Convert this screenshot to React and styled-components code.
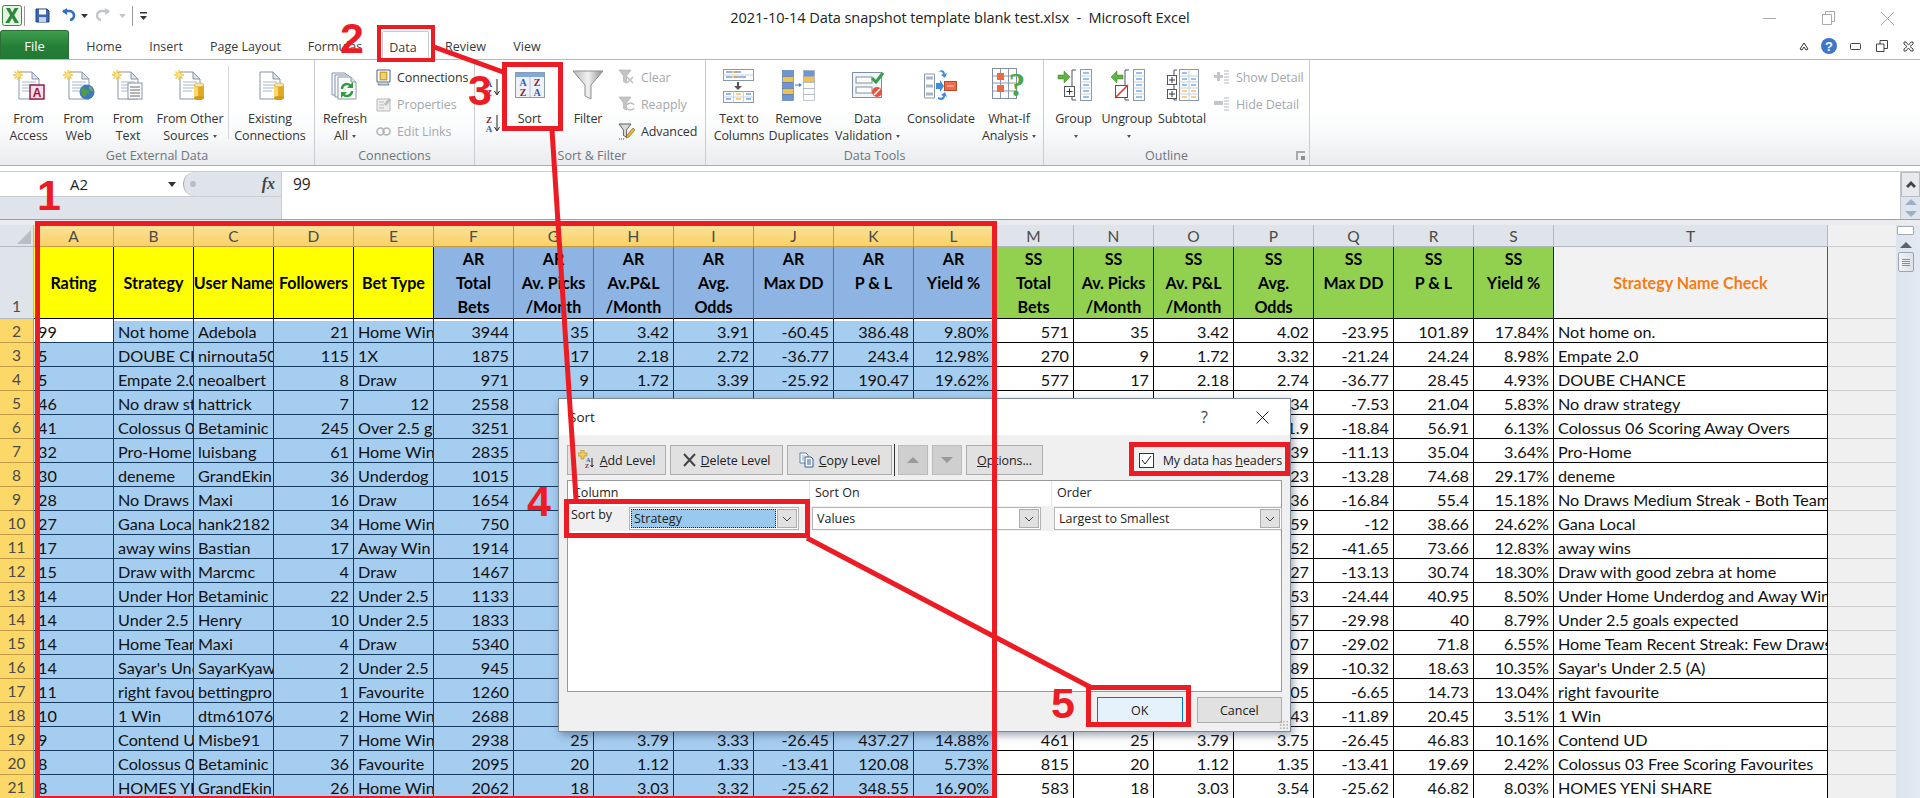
import React from 'react';
import styled, { createGlobalStyle, css } from 'styled-components';

const Global = createGlobalStyle`
  html, body { margin: 0; padding: 0; background: #fff; }
  body { font-family: "Open Sans", "Liberation Sans", sans-serif; overflow: hidden; }
  * { box-sizing: border-box; }
`;

const RED = '#ed1c24';
const UI = `"Open Sans", "Liberation Sans", sans-serif`;
const CELL = `Lato, "Liberation Sans", sans-serif`;

const Page = styled.div`position: relative; width: 1920px; height: 798px; overflow: hidden; background: #fff;`;

/* ---------- title bar ---------- */
const TitleBar = styled.header`position: relative; height: 31px; display: flex; align-items: center; background: #fff;`;
const Qat = styled.div`display: flex; align-items: center; height: 100%;`;
const QatSlot = styled.div`width: ${p => p.$w}px; display: flex; justify-content: center; align-items: center;`;
const QatSep = styled.div`width: 1px; height: 20px; background: #9a9a9a; margin: 0 ${p => p.$m || 0}px;`;
const TitleText = styled.div`
  position: absolute; left: 0; right: 0; top: 7px; text-align: center; white-space: pre;
  font: 14.6px/20px ${UI}; color: #222; letter-spacing: -0.1px;
`;
const WinControls = styled.div`position: absolute; right: 26px; top: 11px; display: flex; gap: 46px; align-items: center;`;

/* ---------- tabs ---------- */
const TabRow = styled.nav`position: relative; height: 29px; display: flex; align-items: flex-end; border-bottom: 1px solid #b6babf; background: #fff;`;
const FileTab = styled.div`
  width: 69px; height: 29px; margin-right: 3px; padding-top: 1px; display: flex; align-items: center; justify-content: center;
  background: linear-gradient(#3f9f4d, #237f37 55%, #217a33); border: 1px solid #2b6e36; border-bottom: 0;
  border-radius: 3px 3px 0 0; color: #fff; font: 13px ${UI};
`;
const Tab = styled.div`
  width: ${p => p.$w}px; height: 28px; padding-top: 2px; display: flex; align-items: center; justify-content: center;
  font: 12.5px ${UI}; color: #3a3a3a;
  ${p => p.$active && css`
    margin: 0 2px -1px 7px; padding-right: 5px; height: 29px; background: #fff;
    border: 1px solid #c6cacf; border-bottom: 0; border-radius: 2px 2px 0 0;
  `}
`;
const RibbonControls = styled.div`position: absolute; left: 1799px; top: 7px; display: flex; align-items: center; height: 16px;`;

/* ---------- ribbon ---------- */
const Ribbon = styled.section`
  height: 106px; display: flex; border-bottom: 1px solid #a9adb3;
  background: linear-gradient(#fff 45%, #f9fafb 70%, #e9ebee);
`;
const Group = styled.div`
  width: ${p => p.$w}px; display: flex; flex-direction: column; border-right: 1px solid #c9ccd1; position: relative;
`;
const GroupBody = styled.div`flex: 1; display: flex; padding-left: ${p => p.$pad || 0}px;`;
const GroupLabel = styled.div`height: 21px; padding-top: 2px; text-align: center; font: 12.5px/19px ${UI}; color: #6d7580; padding-left: ${p => p.$shift || 0}px; padding-right: ${p => p.$rshift || 0}px;`;
const BigBtn = styled.div`width: ${p => p.$w}px; display: flex; flex-direction: column; align-items: center; padding-top: 9px; position: relative;`;
const BigIcon = styled.div`height: 32px; margin-bottom: 9px; display: flex; align-items: center; justify-content: center;`;
const BigLabel = styled.div`font: 12.5px/17px ${UI}; color: #333; text-align: center; white-space: pre-line; letter-spacing: -0.1px;`;
const Caret = styled.span`display: inline-block; width: 0; height: 0; margin-left: 4px; vertical-align: 2px; border: 2.5px solid transparent; border-top: 3px solid #555; border-bottom: 0;`;
const VDivider = styled.div`width: 1px; margin: 6px 1px 5px; background: #d5d8dc;`;
const SmallCol = styled.div`display: flex; flex-direction: column; padding-top: ${p => p.$top || 4}px; gap: ${p => p.$gap || 1}px; margin-left: ${p => p.$ml || 0}px;`;
const SmallItem = styled.div`height: 26px; display: flex; align-items: center; gap: 6px; font: 12.5px ${UI}; letter-spacing: -0.1px; color: ${p => p.$off ? '#a4a8ad' : '#333'}; white-space: nowrap;`;
const SortArrows = styled.div`width: 18px; margin: 0 0 0 9px; display: flex; flex-direction: column; padding-top: 18px; gap: 16px;`;
const Launcher = styled.div`position: absolute; right: 4px; bottom: 5px; width: 9px; height: 9px; border-left: 2px solid #aaa; border-top: 2px solid #aaa; &::after { content: ''; position: absolute; right: 0; bottom: 0; width: 4px; height: 4px; background: #8a8f96; }`;

/* ---------- formula bar ---------- */
const FormulaBar = styled.div`margin-top: 5px; height: 48px; display: flex; border-top: 1px solid #c9ccd1; background: #fff; position: relative;`;
const NameArea = styled.div`width: 282px; display: flex; flex-direction: column; border-right: 1px solid #c9ccd1;`;
const NameTop = styled.div`height: 24px; display: flex; align-items: center;`;
const NameBox = styled.div`width: 183px; padding-left: 70px; display: flex; align-items: center; justify-content: space-between; padding-right: 7px; font: 15px ${UI}; color: #222;`;
const DownTri = styled.span`width: 0; height: 0; border: 4.5px solid transparent; border-top: 5px solid #333; border-bottom: 0;`;
const FxBox = styled.div`flex: 1; height: 100%; background: #dfe3ea; border-radius: 12px 0 0 12px; border-left: 1px solid #a9adb3; display: flex; align-items: center; padding-left: 6px; justify-content: space-between; padding-right: 6px;`;
const Knob = styled.span`width: 6px; height: 6px; border-radius: 50%; background: #b9bec5;`;
const Fx = styled.span`font: italic bold 16px "Liberation Serif", serif; color: #444;`;
const NameBottom = styled.div`flex: 1; background: #dfe3ea; border-top: 1px solid #c9ccd1;`;
const FormulaValue = styled.div`flex: 1; padding: 2px 0 0 11px; font: 15.5px/20px ${UI}; color: #222;`;
const MiniScroll = styled.div`width: 20px; display: flex; flex-direction: column; background: #dfe5ee; border-left: 1px solid #c3c7cd;`;
const MiniUp = styled.div`height: 25px; background: #e7e9ec; border: 1px solid #b9bdc3; display: flex; align-items: center; justify-content: center;`;
const MiniArrows = styled.div`flex: 1; display: flex; flex-direction: column; align-items: center; justify-content: center; gap: 6px;`;
const Tri = styled.span`width: 0; height: 0; border-left: 6px solid transparent; border-right: 6px solid transparent; ${p => p.$down ? `border-top: 6px solid ${p.$c || '#9fb0c4'};` : `border-bottom: 6px solid ${p.$c || '#9fb0c4'};`}`;

/* ---------- sheet ---------- */
const SheetArea = styled.div`height: 579px; display: flex; border-top: 1px solid #9ca1a7; padding-top: 5px; background: #e9ebef;`;
const Sheet = styled.div`width: 1896px; display: grid; grid-template-columns: 34px repeat(19, 80px) 274px 68px; grid-auto-rows: 24px; grid-template-rows: 22px 72px; background: #f0f0f0; align-content: start;`;
const Corner = styled.div`background: #dfe3ea; border-right: 1px solid #b3b8bf; border-bottom: 1px solid #b3b8bf; position: relative; &::after { content: ''; position: absolute; right: 2px; bottom: 2px; border-left: 14px solid transparent; border-bottom: 14px solid #b9bec5; }`;
const ColHead = styled.div`
  display: flex; align-items: center; justify-content: center; font: 15.5px ${CELL}; color: #4b4b4b;
  border-bottom: 1px solid ${p => p.$sel ? '#c49a45' : '#b3b8bf'}; border-right: 1px solid ${p => p.$sel ? '#c49a45' : '#b3b8bf'};
  background: ${p => p.$sel ? 'linear-gradient(#fbe39b,#f9d166)' : '#dfe3ea'};
`;
const RowHead = styled.div`
  display: flex; align-items: center; justify-content: center; font: 15.5px ${CELL}; color: #4b4b4b;
  border-bottom: 1px solid ${p => p.$sel ? '#c49a45' : '#b3b8bf'}; border-right: 1px solid ${p => p.$sel ? '#c49a45' : '#b3b8bf'};
  background: ${p => p.$sel ? '#fcd869' : '#dfe3ea'};
  ${p => p.$tall && 'align-items: flex-end; padding-bottom: 3px;'}
`;
const HEADBG = { y: '#ffff00', b: '#8db4e2', g: '#92d050', t: '#f2f2f2' };
const HEADLINE = { y: '#000', b: '#4f74a3', g: '#1b2a12', t: '#555' };
const HeadCell = styled.div`
  background: ${p => HEADBG[p.$k]}; color: ${p => p.$k === 't' ? '#f57c14' : '#000'};
  border-right: 1px solid ${p => HEADLINE[p.$k]}; border-bottom: 1px solid #000;
  font: bold 16.1px/24px ${CELL}; text-align: center; white-space: pre-line; overflow: hidden;
  ${p => p.$single && 'display: flex; align-items: center; justify-content: center; white-space: nowrap;'}
`;
const Cell = styled.div`
  background: ${p => p.$active ? '#fff' : p.$blue ? '#a5cdf0' : '#fff'};
  border-right: 1px solid ${p => p.$blue ? '#153a5e' : '#000'};
  border-bottom: 1px solid ${p => p.$blue ? '#153a5e' : '#000'};
  ${p => p.$first && 'box-shadow: inset 0 2px 0 #fff;'}
  font: 16.2px/25px ${CELL}; color: #111; padding: 0 4px; white-space: nowrap; overflow: hidden;
  text-align: ${p => p.$right ? 'right' : 'left'};
`;
const BlankCell = styled.div`border-bottom: 1px solid #cfcfcf; background: #f0f0f0;`;
const VScroll = styled.div`flex: 1; background: linear-gradient(90deg, #dde4ee, #e3e9f2); display: flex; flex-direction: column; align-items: center; padding-right: 5px;`;
const SplitBox = styled.div`width: 17px; height: 9px; margin: 1px 0 7px; background: #fff; border: 1px solid #a5aab1; border-radius: 1px;`;
const Thumb = styled.div`width: 16px; height: 20px; margin-top: 4px; background: linear-gradient(90deg,#f0f2f5,#dde1e7); border: 1px solid #9ea5ae; border-radius: 2px; display: flex; flex-direction: column; justify-content: center; align-items: center; gap: 1px; & > i { width: 8px; height: 1px; background: #8a9099; }`;

/* ---------- dialog ---------- */
const Dialog = styled.div`
  position: absolute; left: 558px; top: 398px; width: 733px; height: 334px; background: #f0f0f0;
  border: 1px solid #7d8994; box-shadow: 2px 3px 8px rgba(30,50,80,.45); display: flex; flex-direction: column;
  font: 12.5px ${UI}; color: #222;
`;
const DlgTitle = styled.div`height: 36px; flex: none; background: #fff; display: flex; align-items: center; padding: 0 21px 0 10px; font: 13.5px ${UI}; color: #222;`;
const DlgTitleText = styled.div`flex: 1;`;
const DlgHelp = styled.span`font: 16px ${UI}; color: #444; margin-right: 48px;`;
const DlgBar = styled.div`flex: none; margin-top: 10px; height: 30px; padding: 0 8px; display: flex; align-items: center;`;
const DlgBtn = styled.div`
  width: ${p => p.$w}px; height: 30px; margin-right: ${p => p.$mr ?? 4}px; flex: none; display: flex; align-items: center; justify-content: center; gap: 5px;
  background: ${p => p.$off ? '#cfcfcf' : '#e1e1e1'}; border: 1px solid ${p => p.$off ? '#bcbcbc' : '#adadad'}; white-space: nowrap; letter-spacing: -0.1px;
`;
const DlgSep = styled.div`width: 1px; height: 32px; background: #333; margin: 0 3px 0 -2px;`;
const CheckWrap = styled.div`margin-left: auto; display: flex; align-items: center; gap: 9px; white-space: nowrap; letter-spacing: -0.1px;`;
const CheckBox = styled.div`width: 15px; height: 15px; background: #fff; border: 1px solid #333; display: flex; align-items: center; justify-content: center;`;
const List = styled.div`flex: none; margin: 5px 0 0 8px; width: 715px; height: 212px; background: #fff; border: 1px solid #9a9a9a; display: flex; flex-direction: column;`;
const ListHead = styled.div`display: grid; grid-template-columns: 242px 242px 1fr; height: 25px; flex: none;`;
const ListHeadCell = styled.div`padding: 3px 0 0 5px; border-right: 1px solid #e6e6e6; &:last-child { border: 0; }`;
const ListRow = styled.div`display: grid; grid-template-columns: 242px 242px 1fr; height: 25px; flex: none; background: #f0f0f0; align-items: center;`;
const ListCell = styled.div`display: flex; align-items: center; padding-left: 2px; height: 100%;`;
const SortBy = styled.span`width: 59px; padding-left: 1px; margin-top: -9px;`;
const Combo = styled.div`width: ${p => p.$w}px; height: 23px; background: #fff; border: 1px solid #b4b4b4; display: flex; align-items: center; padding: 1px; gap: 1px;`;
const ComboText = styled.div`flex: 1; height: 100%; display: flex; align-items: center; padding-left: 3px; ${p => p.$sel && 'background: #99c9ef; outline: 1px dotted #223; outline-offset: -1px;'}`;
const ComboBtn = styled.div`width: 20px; height: 100%; background: #e1e1e1; border: 1px solid #adadad; display: flex; align-items: center; justify-content: center;`;
const DlgFooter = styled.div`flex: none; margin-top: 5px; padding-right: 8px; display: flex; justify-content: flex-end; gap: 14px;`;
const FootBtn = styled.div`width: 85.5px; height: 26px; display: flex; align-items: center; justify-content: center; background: ${p => p.$def ? '#e5f1fb' : '#e1e1e1'}; border: 1px solid ${p => p.$def ? '#0078d7' : '#adadad'};`;
const Grip = styled.div`position: absolute; right: 1px; bottom: 1px; width: 10px; height: 10px; background-image: radial-gradient(#b5b5b5 1px, transparent 1.2px); background-size: 3.3px 3.3px;`;

/* ---------- annotations ---------- */
const RedBox = styled.div`position: absolute; left: ${p => p.$x}px; top: ${p => p.$y}px; width: ${p => p.$w}px; height: ${p => p.$h}px; border: ${p => p.$b || 5}px solid ${RED}; pointer-events: none;`;
const Marker = styled.div`position: absolute; left: ${p => p.$x}px; top: ${p => p.$y}px; font: bold 43px/43px "Liberation Sans", sans-serif; color: ${RED};`;
const LineLayer = styled.svg`position: absolute; left: 0; top: 0; pointer-events: none;`;

/* ---------- icons ---------- */
const Sparkle = () => <g stroke="#f3c532" strokeWidth="1.3"><path d="M5 1v10M0 6h10M1.5 2.5l7 7M8.5 2.5l-7 7"/><circle cx="5" cy="6" r="2" fill="#fbe68a" stroke="none"/></g>;
const Doc = ({ children, lines = true, spark = true }) => (
  <svg width="32" height="32" viewBox="0 0 32 32">
    <path d="M6 3h13l7 7v20H6z" fill="#fff" stroke="#8795aa"/>
    <path d="M19 3v7h7z" fill="#dde3ec" stroke="#8795aa"/>
    {lines && <path d="M9 13h14M9 16h14M9 19h14M9 22h9" stroke="#a7b7cf"/>}
    {spark && <Sparkle />}
    {children}
  </svg>
);
const Cyl = ({ x = 20, y = 16 }) => (
  <g>
    <rect x={x} y={y} width="10" height="13" fill="#e4a81e"/>
    <rect x={x} y={y} width="4" height="13" fill="#f7d774"/>
    <ellipse cx={x + 5} cy={y} rx="5" ry="2" fill="#fbe6a0" stroke="#c48c14" strokeWidth=".5"/>
    <ellipse cx={x + 5} cy={y + 13} rx="5" ry="2" fill="#d49a18"/>
  </g>
);
const IconAccess = () => <Doc><rect x="17" y="16" width="14" height="14" fill="#f8dfe8" stroke="#8c1238" strokeWidth="1.4"/><text x="24" y="27.5" fontSize="12" fontWeight="bold" textAnchor="middle" fill="#a3123f" fontFamily="Liberation Sans">A</text></Doc>;
const IconWeb = () => <Doc><circle cx="24" cy="23" r="7.5" fill="#3f78c4"/><path d="M19 19c3 0 4 2 6 2s1 3-1 4-2 4-4 2-3-6-1-8z" fill="#4e9e3c"/><path d="M26 17c2 0 4 3 4 5-2 1-3-1-4-2z" fill="#6ab04c"/></Doc>;
const IconText = () => <Doc><rect x="16" y="14" width="14" height="16" fill="#fff" stroke="#8795aa"/><path d="M18 18h10M18 21h10M18 24h10M18 27h10" stroke="#555" strokeWidth=".9"/></Doc>;
const IconOther = () => <Doc><Cyl /></Doc>;
const IconExisting = () => <Doc spark={false}><Cyl /></Doc>;
const IconRefresh = () => (
  <svg width="32" height="32" viewBox="0 0 32 32">
    <path d="M3 4h13l5 5v17H3z" fill="#f4f6f9" stroke="#8795aa"/>
    <path d="M6 6h13l5 5v17H6z" fill="#f8f9fb" stroke="#8795aa"/>
    <path d="M9 8h13l5 5v17H9z" fill="#fff" stroke="#8795aa"/>
    <path d="M22 8v5h5" fill="#dde3ec" stroke="#8795aa"/>
    <path d="M13 20a5 5 0 0 1 9-3" fill="none" stroke="#2f9e3c" strokeWidth="2.4"/><path d="M24 13v6h-6z" fill="#2f9e3c"/>
    <path d="M23 22a5 5 0 0 1-9 3" fill="none" stroke="#2f9e3c" strokeWidth="2.4"/><path d="M12 29v-6h6z" fill="#2f9e3c"/>
  </svg>
);
const IconConn = () => <svg width="15" height="17" viewBox="0 0 15 17"><path d="M1 1h13v12H1z" fill="#fff" stroke="#47608a"/><path d="M3 14l-1 2h11l-1-2" fill="#c8d3e3" stroke="#47608a" strokeWidth=".7"/><rect x="4" y="3" width="7" height="8" fill="#e9b632" stroke="#a77f1d" strokeWidth=".6"/><path d="M5 5h5M5 7h5M5 9h5" stroke="#fff" strokeWidth=".7"/></svg>;
const IconProps = () => <svg width="15" height="16" viewBox="0 0 15 16"><path d="M1 3h13v12H1z" fill="#eee" stroke="#b7b7b7"/><path d="M3 6h5M3 9h5M3 12h5" stroke="#bbb"/><path d="M8 8l5-6 2 2-5 6z" fill="#bdbdbd"/></svg>;
const IconLinks = () => <svg width="15" height="9" viewBox="0 0 15 9" fill="none" stroke="#b3b3b3" strokeWidth="1.6"><rect x="1" y="1" width="7" height="7" rx="3.5"/><rect x="7" y="1" width="7" height="7" rx="3.5"/></svg>;
const Letters = ({ a, b, x, c1, c2, size = 9 }) => <g fontFamily="Liberation Serif" fontWeight="bold" fontSize={size} textAnchor="middle"><text x={x} y={size} fill={c1}>{a}</text><text x={x} y={size * 2} fill={c2}>{b}</text></g>;
const IconAZ = () => <svg width="18" height="20" viewBox="0 0 18 20"><Letters a="A" b="Z" x="5" c1="#2a5fb0" c2="#8a2030"/><path d="M13 1v15M10.5 13l2.5 4 2.5-4" stroke="#222" fill="none"/></svg>;
const IconZA = () => <svg width="18" height="20" viewBox="0 0 18 20"><Letters a="Z" b="A" x="5" c1="#8a2030" c2="#2a5fb0"/><path d="M13 1v15M10.5 13l2.5 4 2.5-4" stroke="#222" fill="none"/></svg>;
const IconSort = () => (
  <svg width="30" height="26" viewBox="0 0 30 26">
    <rect x=".5" y=".5" width="29" height="25" fill="#eef2f8" stroke="#8a9bb5"/>
    <rect x="1" y="1" width="28" height="4" fill="#7fa8dd"/>
    <path d="M15 5v20" stroke="#b9c4d6"/>
    <g fontFamily="Liberation Serif" fontWeight="bold" fontSize="10" textAnchor="middle">
      <text x="8" y="14" fill="#2a5fb0">A</text><text x="8" y="24" fill="#8a2030">Z</text>
      <text x="22" y="14" fill="#8a2030">Z</text><text x="22" y="24" fill="#2a5fb0">A</text>
    </g>
  </svg>
);
const IconFunnel = () => <svg width="32" height="32" viewBox="0 0 32 32"><defs><linearGradient id="fn" x1="0" x2="1"><stop offset="0" stopColor="#b5b5b5"/><stop offset=".5" stopColor="#f2f2f2"/><stop offset="1" stopColor="#8f8f8f"/></linearGradient></defs><path d="M1 2h30L19 16v14l-6-3V16z" fill="url(#fn)" stroke="#8f8f8f"/></svg>;
const MiniFunnel = ({ c = '#c4c4c4' }) => <path d="M1 1h12L8.5 7v7l-3-1.5V7z" fill={c} stroke="#aaa" strokeWidth=".6"/>;
const IconClear = () => <svg width="17" height="16" viewBox="0 0 17 16"><MiniFunnel/><path d="M9 8l6 6M15 8l-6 6" stroke="#c2c2c2" strokeWidth="1.6"/></svg>;
const IconReapply = () => <svg width="17" height="16" viewBox="0 0 17 16"><MiniFunnel/><path d="M9 9a4 4 0 0 1 7 0M16 12a4 4 0 0 1-7 0" fill="none" stroke="#bcbcbc" strokeWidth="1.5"/></svg>;
const IconAdvanced = () => <svg width="17" height="17" viewBox="0 0 17 17"><MiniFunnel c="#d8d8d8"/><path d="M1 1h12L8.5 7v7l-3-1.5V7z" fill="none" stroke="#555" strokeWidth=".8"/><path d="M8 15l1-3 6-7 2 2-6 7z" fill="#e8b33e" stroke="#7a5a13" strokeWidth=".6"/><path d="M1 16h6" stroke="#444" strokeDasharray="1 1"/></svg>;
const TTC = () => (
  <svg width="32" height="36" viewBox="0 0 32 36">
    <rect x=".5" y="2.5" width="30" height="11" fill="#fff" stroke="#8899ad"/><path d="M.5 8h30" stroke="#c4d0df"/>
    <path d="M3 5h6M11 5h7M3 10h6M11 10h12" stroke="#2f6fc4"/><path d="M8 5h7M9 10h5" stroke="#f39a14"/>
    <path d="M15 15v5" stroke="#555" strokeWidth="2"/><path d="M11 19h8l-4 4z" fill="#555"/>
    <rect x=".5" y="24.5" width="30" height="11" fill="#fff" stroke="#8899ad"/><path d="M10.5 24.5v11M20.5 24.5v11M.5 30h30" stroke="#c4d0df"/>
    <path d="M3 27h5M3 32h5M23 27h5M23 32h5" stroke="#2f6fc4"/><path d="M13 27h5M13 32h5" stroke="#f39a14"/>
  </svg>
);
const Dups = () => {
  const c = ['#6d95d6', '#f1c14e', '#6d95d6', '#f1c14e', '#6d95d6'];
  return (
    <svg width="34" height="34" viewBox="0 0 34 34">
      {c.map((f, i) => <rect key={i} x=".5" y={2.5 + i * 6} width="11" height="6" fill={f} stroke="#5273a8" strokeWidth=".6"/>)}
      {['#6d95d6', '#f1c14e', '#fff', '#fff', '#fff'].map((f, i) => <rect key={i} x="21.5" y={2.5 + i * 6} width="11" height="6" fill={f} stroke="#97a3b4" strokeWidth=".6"/>)}
      <path d="M13 17h5" stroke="#3c7bd0"/><path d="M17 15l3 2-3 2z" fill="#3c7bd0"/>
    </svg>
  );
};
const Valid = () => (
  <svg width="32" height="30" viewBox="0 0 32 30">
    <rect x=".5" y="2.5" width="29" height="25" fill="#f3f5f8" stroke="#7f8ea3"/>
    <rect x="4" y="7" width="16" height="6" fill="#fff" stroke="#7f8ea3"/><rect x="4" y="17" width="16" height="6" fill="#fff" stroke="#7f8ea3"/>
    <path d="M20 8l4 4 7-9" fill="none" stroke="#35a047" strokeWidth="3"/>
    <circle cx="25" cy="22" r="5" fill="#e5533c"/><path d="M22 25l6-6" stroke="#fff" strokeWidth="1.6"/>
  </svg>
);
const Consol = () => (
  <svg width="34" height="34" viewBox="0 0 34 34">
    <path d="M.5 6h10v24H.5z" fill="#fff" stroke="#8a97aa"/><path d="M2 10h7M2 18h7M2 26h7" stroke="#aab6c7" strokeWidth="3"/>
    <rect x="20.5" y="13.5" width="12" height="9" fill="#ef6a45" stroke="#b34a2e"/><path d="M23 18h7" stroke="#fbd1c4"/>
    <path d="M12 15h4v-3l4 6-4 6v-3h-4z" fill="#3c8fd8"/>
    <path d="M14 4c3-3 7-2 7 2l2-1-2 5-4-3 2-1c0-2-3-3-5-2z" fill="#3c8fd8"/>
    <path d="M14 31c3 2 7 1 7-3l2 1-2-5-4 3 2 1c0 2-3 2-5 1z" fill="#3c8fd8"/>
  </svg>
);
const WhatIf = () => (
  <svg width="34" height="36" viewBox="0 0 34 36">
    <rect x=".5" y="1.5" width="24" height="30" fill="#fff" stroke="#7f8ea3"/>
    <path d="M8.5 1.5v30M16.5 1.5v30M.5 9h24M.5 16h24M.5 24h24" stroke="#8a97aa"/>
    <rect x="5" y="6" width="7" height="7" fill="#ee6840"/><rect x="5" y="18" width="7" height="7" fill="#ee6840"/>
    <text x="25" y="29" textAnchor="middle" fontFamily="Liberation Serif" fontSize="33" fontWeight="bold" fill="#4ea64a">?</text>
  </svg>
);
const Outline = ({ mode }) => (
  <svg width="36" height="36" viewBox="0 0 36 36">
    <path d="M20 3h-4v30h4" fill="none" stroke="#4b5563"/>
    <rect x="24.5" y="2.5" width="11" height="31" fill="#fff" stroke="#8a97aa"/>
    <path d="M24.5 9h11M24.5 15h11M24.5 21h11M24.5 27h11" stroke="#c4d0df"/>
    <path d="M27 6h6M27 12h6M27 18h6M27 24h6M27 30h6" stroke="#2f86d8"/>
    {mode === 'g' ? (
      <g><path d="M2 8h6V4l6 6-6 6v-4H2z" fill="#5fb340" stroke="#3d7f28" strokeWidth=".5"/><rect x="8.5" y="19.5" width="10" height="10" fill="#fff" stroke="#555"/><path d="M10.5 24.5h6M13.5 21.5v6" stroke="#333"/></g>
    ) : (
      <g><path d="M14 8H8V4L2 10l6 6v-4h6z" fill="#5fb340" stroke="#3d7f28" strokeWidth=".5"/><rect x="6.5" y="18.5" width="12" height="12" fill="#fff" stroke="#555"/><path d="M6 31L19 18" stroke="#e5352c" strokeWidth="1.6"/></g>
    )}
  </svg>
);
const Subt = () => (
  <svg width="34" height="36" viewBox="0 0 34 36">
    <path d="M12 3h-3v30h3" fill="none" stroke="#4b5563"/>
    <rect x="2.5" y="8.5" width="9" height="9" fill="#fff" stroke="#555"/><path d="M4 13h6M7 10v6" stroke="#333"/>
    <rect x="2.5" y="22.5" width="9" height="9" fill="#fff" stroke="#555"/><path d="M4 27h6M7 24v6" stroke="#333"/>
    <rect x="14.5" y="2.5" width="19" height="31" fill="#fff" stroke="#8a97aa"/>
    <path d="M24 2.5v31M14.5 9h19M14.5 15h19M14.5 21h19M14.5 27h19" stroke="#c4d0df"/>
    <path d="M17 6h5M17 12h5M17 18h5M26 12h5M26 18h5" stroke="#2f86d8"/>
    <path d="M17 24h5M17 30h5M26 24h5M26 30h5" stroke="#f39a14"/>
  </svg>
);
const Detail = ({ plus }) => <svg width="16" height="15" viewBox="0 0 16 15"><path d={plus ? 'M3 2h3v3h3v3H6v3H3V8H0V5h3z' : 'M0 4h9v4H0z'} fill="#c2c6cb"/><path d="M10 1h5M10 4h5M10 7h5M10 10h5M10 13h5" stroke="#b4b8bd"/></svg>;

const ExcelLogo = () => (
  <svg width="20" height="21" viewBox="0 0 20 21">
    <rect x=".5" y=".5" width="19" height="20" rx="2" fill="#e8f3e4" stroke="#3d8a3f"/>
    <path d="M4 3h4l2.2 4.6L12.6 3H16.5l-4.3 7.2L17 18h-4.2l-2.7-5-2.8 5H3.2l4.9-7.8z" fill="#2a8a3a"/>
  </svg>
);
const Save = () => <svg width="15" height="15" viewBox="0 0 15 15"><path d="M1 1h11l2 2v11H1z" fill="#3b66b5" stroke="#22407c"/><rect x="4" y="1.5" width="7" height="5" fill="#fff"/><rect x="4" y="9" width="7" height="5" fill="#c7d3ea"/></svg>;
const Undo = ({ c = '#2f6fc4' }) => <svg width="15" height="15" viewBox="0 0 15 15" fill="none"><path d="M2 3h6a4.5 4.5 0 0 1 1 9" stroke={c} strokeWidth="2.6"/><path d="M6 0v7L1 3.5z" fill={c}/></svg>;
const Redo = () => <svg width="14" height="15" viewBox="0 0 14 15" fill="none"><path d="M13 3H6a4.5 4.5 0 0 0-1 9" stroke="#c2c6cb" strokeWidth="2.4"/><path d="M9 0v7l5-3.5z" fill="#c2c6cb"/></svg>;
const TinyCaret = ({ c = '#333' }) => <svg width="7" height="4" viewBox="0 0 7 4"><path d="M0 0h7L3.5 4z" fill={c}/></svg>;
const Customize = () => <svg width="7" height="8" viewBox="0 0 7 8"><path d="M0 0h7v1.4H0zM0 4h7L3.5 8z" fill="#333"/></svg>;
const HelpIcon = () => <svg width="16" height="16" viewBox="0 0 16 16"><circle cx="8" cy="8" r="8" fill="#3f76c8"/><text x="8" y="12.5" fontSize="13" fontWeight="bold" fill="#fff" textAnchor="middle" fontFamily="Liberation Sans">?</text></svg>;

const ChevDown = () => <svg width="10" height="6" viewBox="0 0 10 6"><path d="M1 1l4 4 4-4" fill="none" stroke="#444"/></svg>;
const AddIcon = () => <svg width="17" height="20" viewBox="0 0 17 20"><path d="M3 0h3v3h3v3H6v3H3V6H0V3h3z" fill="#f4cf4d" stroke="#a98517" strokeWidth=".6"/><text x="10" y="12" fontSize="6" fontWeight="bold" fill="#2a5fb0" textAnchor="middle" fontFamily="Liberation Serif">A</text><text x="9" y="18" fontSize="6" fontWeight="bold" fill="#8a2030" textAnchor="middle" fontFamily="Liberation Serif">Z</text><path d="M14 8v9M12.5 15l1.5 2 1.5-2" stroke="#222" fill="none"/></svg>;
const DelIcon = () => <svg width="13" height="14" viewBox="0 0 13 14"><path d="M1 1l11 12M12 1L1 13" stroke="#444" strokeWidth="2"/></svg>;
const CopyIcon = () => <svg width="15" height="16" viewBox="0 0 15 16"><path d="M1 1h6l2 2v8H1z" fill="#fff" stroke="#5c7fb3"/><path d="M6 5h6l2 2v8H6z" fill="#fff" stroke="#31589a"/><path d="M8 8h4M8 10h4M8 12h4" stroke="#31589a"/><path d="M3 4h3M3 6h2M3 8h2" stroke="#7d9bc8"/></svg>;

/* ---------- data ---------- */
const COLS = 'ABCDEFGHIJKLMNOPQRS'.split('');
const HEAD = [
  ['y', 'Rating'], ['y', 'Strategy'], ['y', 'User Name'], ['y', 'Followers'], ['y', 'Bet Type'],
  ['b', 'AR\nTotal\nBets'], ['b', 'AR\nAv. Picks\n/Month'], ['b', 'AR\nAv.P&L\n/Month'], ['b', 'AR\nAvg.\nOdds'], ['b', 'AR\nMax DD'], ['b', 'AR\nP & L'], ['b', 'AR\nYield %'],
  ['g', 'SS\nTotal\nBets'], ['g', 'SS\nAv. Picks\n/Month'], ['g', 'SS\nAv. P&L\n/Month'], ['g', 'SS\nAvg.\nOdds'], ['g', 'SS\nMax DD'], ['g', 'SS\nP & L'], ['g', 'SS\nYield %'],
];
const ROWS = [
  ['99','Not home on.','Adebola','21','Home Win','3944','35','3.42','3.91','-60.45','386.48','9.80%','571','35','3.42','4.02','-23.95','101.89','17.84%','Not home on.'],
  ['5','DOUBE CHANCE','nirnouta50','115','1X','1875','17','2.18','2.72','-36.77','243.4','12.98%','270','9','1.72','3.32','-21.24','24.24','8.98%','Empate 2.0'],
  ['5','Empate 2.0','neoalbert','8','Draw','971','9','1.72','3.39','-25.92','190.47','19.62%','577','17','2.18','2.74','-36.77','28.45','4.93%','DOUBE CHANCE'],
  ['46','No draw strategy','hattrick','7','12','2558','','','','','','','','','','3.34','-7.53','21.04','5.83%','No draw strategy'],
  ['41','Colossus 06 Scoring Away Overs','Betaminic','245','Over 2.5 goals','3251','','','','','','','','','','11.9','-18.84','56.91','6.13%','Colossus 06 Scoring Away Overs'],
  ['32','Pro-Home','luisbang','61','Home Win','2835','','','','','','','','','','3.39','-11.13','35.04','3.64%','Pro-Home'],
  ['30','deneme','GrandEkin','36','Underdog','1015','','','','','','','','','','3.23','-13.28','74.68','29.17%','deneme'],
  ['28','No Draws Medium','Maxi','16','Draw','1654','','','','','','','','','','3.36','-16.84','55.4','15.18%','No Draws Medium Streak - Both Teams'],
  ['27','Gana Local','hank2182','34','Home Win','750','','','','','','','','','','3.59','-12','38.66','24.62%','Gana Local'],
  ['17','away wins','Bastian','17','Away Win','1914','','','','','','','','','','3.52','-41.65','73.66','12.83%','away wins'],
  ['15','Draw with good','Marcmc','4','Draw','1467','','','','','','','','','','3.27','-13.13','30.74','18.30%','Draw with good zebra at home'],
  ['14','Under Home Underdog','Betaminic','22','Under 2.5','1133','','','','','','','','','','3.53','-24.44','40.95','8.50%','Under Home Underdog and Away Win'],
  ['14','Under 2.5 goals','Henry','10','Under 2.5','1833','','','','','','','','','','3.57','-29.98','40','8.79%','Under 2.5 goals expected'],
  ['14','Home Team Recent','Maxi','4','Draw','5340','','','','','','','','','','3.07','-29.02','71.8','6.55%','Home Team Recent Streak: Few Draws'],
  ['14',"Sayar's Under",'SayarKyaw','2','Under 2.5','945','','','','','','','','','','3.89','-10.32','18.63','10.35%',"Sayar's Under 2.5 (A)"],
  ['11','right favourite','bettingpro','1','Favourite','1260','','','','','','','','','','3.05','-6.65','14.73','13.04%','right favourite'],
  ['10','1 Win','dtm61076','2','Home Win','2688','','','','','','','','','','3.43','-11.89','20.45','3.51%','1 Win'],
  ['9','Contend UD','Misbe91','7','Home Win','2938','25','3.79','3.33','-26.45','437.27','14.88%','461','25','3.79','3.75','-26.45','46.83','10.16%','Contend UD'],
  ['8','Colossus 03','Betaminic','36','Favourite','2095','20','1.12','1.33','-13.41','120.08','5.73%','815','20','1.12','1.35','-13.41','19.69','2.42%','Colossus 03 Free Scoring Favourites'],
  ['8','HOMES YENİ SHARE','GrandEkin','26','Home Win','2062','18','3.03','3.32','-25.62','348.55','16.90%','583','18','3.03','3.54','-25.62','46.82','8.03%','HOMES YENİ SHARE'],
];
const isNum = s => /^-?[\d.]+%?$/.test(s);

const Big = ({ w, icon, label, caret }) => (
  <BigBtn $w={w}>
    <BigIcon>{icon}</BigIcon>
    <BigLabel>{label}{caret && <Caret />}</BigLabel>
  </BigBtn>
);

export default function App() {
  return (
    <Page>
      <Global />
      <TitleBar>
        <Qat>
          <QatSlot $w={23}><ExcelLogo /></QatSlot>
          <QatSep $m={1} />
          <QatSlot $w={32}><Save /></QatSlot>
          <QatSlot $w={20}><Undo /></QatSlot>
          <QatSlot $w={12}><TinyCaret /></QatSlot>
          <QatSlot $w={26}><Redo /></QatSlot>
          <QatSlot $w={12}><TinyCaret c="#c2c6cb" /></QatSlot>
          <QatSep $m={4} />
          <QatSlot $w={13}><Customize /></QatSlot>
        </Qat>
        <TitleText>2021-10-14 Data snapshot template blank test.xlsx  -  Microsoft Excel</TitleText>
        <WinControls>
          <svg width="13" height="13" viewBox="0 0 13 13"><path d="M0 6.5h13" stroke="#aaa"/></svg>
          <svg width="13" height="14" viewBox="0 0 13 14" fill="none" stroke="#aaa"><path d="M.5 3.5h9v10h-9z"/><path d="M3.5 3V.5h9v10H10"/></svg>
          <svg width="13" height="13" viewBox="0 0 13 13"><path d="M0 0l13 13M13 0L0 13" stroke="#aaa"/></svg>
        </WinControls>
      </TitleBar>
      <TabRow>
        <FileTab>File</FileTab>
        <Tab $w={64}>Home</Tab>
        <Tab $w={60}>Insert</Tab>
        <Tab $w={99}>Page Layout</Tab>
        <Tab $w={80}>Formulas</Tab>
        <Tab $w={47} $active>Data</Tab>
        <Tab $w={69}>Review</Tab>
        <Tab $w={54}>View</Tab>
        <RibbonControls>
          <svg width="10" height="10" viewBox="0 0 10 10" style={{ marginRight: 12 }}><path d="M1 8l4-6 4 6-2 1-2-3-2 3z" fill="none" stroke="#333"/></svg>
          <HelpIcon />
          <svg width="11" height="7" viewBox="0 0 11 7" style={{ marginLeft: 13 }}><rect x=".5" y=".5" width="10" height="6" rx="1" fill="#fff" stroke="#444"/></svg>
          <svg width="12" height="12" viewBox="0 0 12 12" style={{ marginLeft: 15 }} fill="#fff" stroke="#444"><path d="M4 .5h7.5v8H4z"/><path d="M.5 4h7.5v7.5H.5z"/></svg>
          <svg width="11" height="11" viewBox="0 0 11 11" style={{ marginLeft: 15 }} fill="none" stroke="#444"><path d="M1 1h2l2.5 3L8 1h2v2L7 5.5 10 8v2H8L5.5 7 3 10H1V8l3-2.5L1 3z"/></svg>
        </RibbonControls>
      </TabRow>
      <Ribbon>
        <Group $w={315}>
          <GroupBody $pad={3}>
            <Big w={51} icon={<IconAccess />} label={'From\nAccess'} />
            <Big w={49} icon={<IconWeb />} label={'From\nWeb'} />
            <Big w={50} icon={<IconText />} label={'From\nText'} />
            <Big w={74} icon={<IconOther />} label={'From Other\nSources'} caret />
            <VDivider />
            <Big w={80} icon={<IconExisting />} label={'Existing\nConnections'} />
          </GroupBody>
          <GroupLabel>Get External Data</GroupLabel>
        </Group>
        <Group $w={160}>
          <GroupBody $pad={1}>
            <Big w={58} icon={<IconRefresh />} label={'Refresh\nAll'} caret />
            <SmallCol $ml={2}>
              <SmallItem><IconConn />Connections</SmallItem>
              <SmallItem $off><IconProps />Properties</SmallItem>
              <SmallItem $off><IconLinks />Edit Links</SmallItem>
            </SmallCol>
          </GroupBody>
          <GroupLabel>Connections</GroupLabel>
        </Group>
        <Group $w={231}>
          <GroupBody>
            <SortArrows><IconAZ /><IconZA /></SortArrows>
            <Big w={55} icon={<IconSort />} label="Sort" />
            <Big w={62} icon={<IconFunnel />} label="Filter" />
            <SmallCol $ml={-1}>
              <SmallItem $off><IconClear />Clear</SmallItem>
              <SmallItem $off><IconReapply />Reapply</SmallItem>
              <SmallItem><IconAdvanced />Advanced</SmallItem>
            </SmallCol>
          </GroupBody>
          <GroupLabel $shift={4}>Sort &amp; Filter</GroupLabel>
        </Group>
        <Group $w={338}>
          <GroupBody $pad={3}>
            <Big w={60} icon={<TTC />} label={'Text to\nColumns'} />
            <Big w={59} icon={<Dups />} label={'Remove\nDuplicates'} />
            <Big w={79} icon={<Valid />} label={'Data\nValidation'} caret />
            <Big w={68} icon={<Consol />} label="Consolidate" />
            <Big w={68} icon={<WhatIf />} label={'What-If\nAnalysis'} caret />
          </GroupBody>
          <GroupLabel>Data Tools</GroupLabel>
        </Group>
        <Group $w={266}>
          <GroupBody $pad={1}>
            <Big w={57} icon={<Outline mode="g" />} label={<>Group{'\n'}<Caret /></>} />
            <Big w={50} icon={<Outline mode="u" />} label={<>Ungroup{'\n'}<Caret /></>} />
            <Big w={60} icon={<Subt />} label="Subtotal" />
            <SmallCol $ml={2} $gap={0}>
              <SmallItem $off><Detail plus />Show Detail</SmallItem>
              <SmallItem $off><Detail />Hide Detail</SmallItem>
            </SmallCol>
          </GroupBody>
          <GroupLabel $rshift={20}>Outline</GroupLabel>
          <Launcher />
        </Group>
      </Ribbon>
      <FormulaBar>
        <NameArea>
          <NameTop>
            <NameBox>A2<DownTri /></NameBox>
            <FxBox><Knob /><Fx>fx</Fx></FxBox>
          </NameTop>
          <NameBottom />
        </NameArea>
        <FormulaValue>99</FormulaValue>
        <MiniScroll>
          <MiniUp><svg width="10" height="7" viewBox="0 0 10 7"><path d="M0 5l5-5 5 5-2 2-3-3-3 3z" fill="#444"/></svg></MiniUp>
          <MiniArrows><Tri /><Tri $down /></MiniArrows>
        </MiniScroll>
      </FormulaBar>
      <SheetArea>
        <Sheet>
          <Corner />
          {COLS.map((c, i) => <ColHead key={c} $sel={i < 12}>{c}</ColHead>)}
          <ColHead>T</ColHead>
          <BlankCell />
          <RowHead $tall>1</RowHead>
          {HEAD.map(([k, t], i) => <HeadCell key={i} $k={k} $single={k === 'y'}>{t}</HeadCell>)}
          <HeadCell $k="t" $single>Strategy Name Check</HeadCell>
          <BlankCell />
          {ROWS.map((r, ri) => (
            <React.Fragment key={ri}>
              <RowHead $sel>{ri + 2}</RowHead>
              {r.map((v, ci) => (
                <Cell
                  key={ci}
                  $blue={ci < 12}
                  $active={ri === 0 && ci === 0}
                  $first={ri === 0}
                  $right={ci > 0 && ci < 19 && isNum(v)}
                >{v}</Cell>
              ))}
              <BlankCell />
            </React.Fragment>
          ))}
        </Sheet>
        <VScroll>
          <SplitBox />
          <Tri $c="#5a6470" />
          <Thumb><i /><i /><i /><i /></Thumb>
        </VScroll>
      </SheetArea>

      <Dialog>
        <DlgTitle>
          <DlgTitleText>Sort</DlgTitleText>
          <DlgHelp>?</DlgHelp>
          <svg width="13" height="13" viewBox="0 0 13 13"><path d="M.5.5l12 12M12.5.5l-12 12" stroke="#222"/></svg>
        </DlgTitle>
        <DlgBar>
          <DlgBtn $w={99}><AddIcon /><span><u>A</u>dd Level</span></DlgBtn>
          <DlgBtn $w={113}><DelIcon /><span><u>D</u>elete Level</span></DlgBtn>
          <DlgBtn $w={105} $mr={4}><CopyIcon /><span><u>C</u>opy Level</span></DlgBtn>
          <DlgSep />
          <DlgBtn $w={30} $off><Tri $c="#999" /></DlgBtn>
          <DlgBtn $w={30} $off><Tri $down $c="#999" /></DlgBtn>
          <DlgBtn $w={77}><span><u>O</u>ptions...</span></DlgBtn>
          <CheckWrap>
            <CheckBox><svg width="11" height="10" viewBox="0 0 11 10"><path d="M1 5l3 4 6-8" fill="none" stroke="#222"/></svg></CheckBox>
            <span>My data has <u>h</u>eaders</span>
          </CheckWrap>
        </DlgBar>
        <List>
          <ListHead>
            <ListHeadCell>Column</ListHeadCell>
            <ListHeadCell>Sort On</ListHeadCell>
            <ListHeadCell>Order</ListHeadCell>
          </ListHead>
          <ListRow>
            <ListCell>
              <SortBy>Sort by</SortBy>
              <Combo $w={170}><ComboText $sel>Strategy</ComboText><ComboBtn><ChevDown /></ComboBtn></Combo>
            </ListCell>
            <ListCell><Combo $w={229}><ComboText>Values</ComboText><ComboBtn><ChevDown /></ComboBtn></Combo></ListCell>
            <ListCell><Combo $w={228}><ComboText>Largest to Smallest</ComboText><ComboBtn><ChevDown /></ComboBtn></Combo></ListCell>
          </ListRow>
        </List>
        <DlgFooter>
          <FootBtn $def>OK</FootBtn>
          <FootBtn>Cancel</FootBtn>
        </DlgFooter>
        <Grip />
      </Dialog>

      <LineLayer width="1920" height="798" viewBox="0 0 1920 798">
        <g stroke={RED} strokeWidth="5" fill="none">
          <path d="M434 47L503 72" />
          <path d="M552 130L576 499" />
          <path d="M807 538L1090 687" />
        </g>
      </LineLayer>
      <RedBox $x={35} $y={221} $w={962} $h={580} />
      <RedBox $x={377} $y={25} $w={58} $h={37} $b={4.5} />
      <RedBox $x={502} $y={62} $w={61} $h={69} />
      <RedBox $x={564} $y={499} $w={246} $h={39} />
      <RedBox $x={1129} $y={442} $w={161} $h={34} />
      <RedBox $x={1086} $y={685} $w={105} $h={42} />
      <Marker $x={37} $y={174}>1</Marker>
      <Marker $x={340} $y={17}>2</Marker>
      <Marker $x={468} $y={69}>3</Marker>
      <Marker $x={527} $y={480}>4</Marker>
      <Marker $x={1051} $y={682}>5</Marker>
    </Page>
  );
}
